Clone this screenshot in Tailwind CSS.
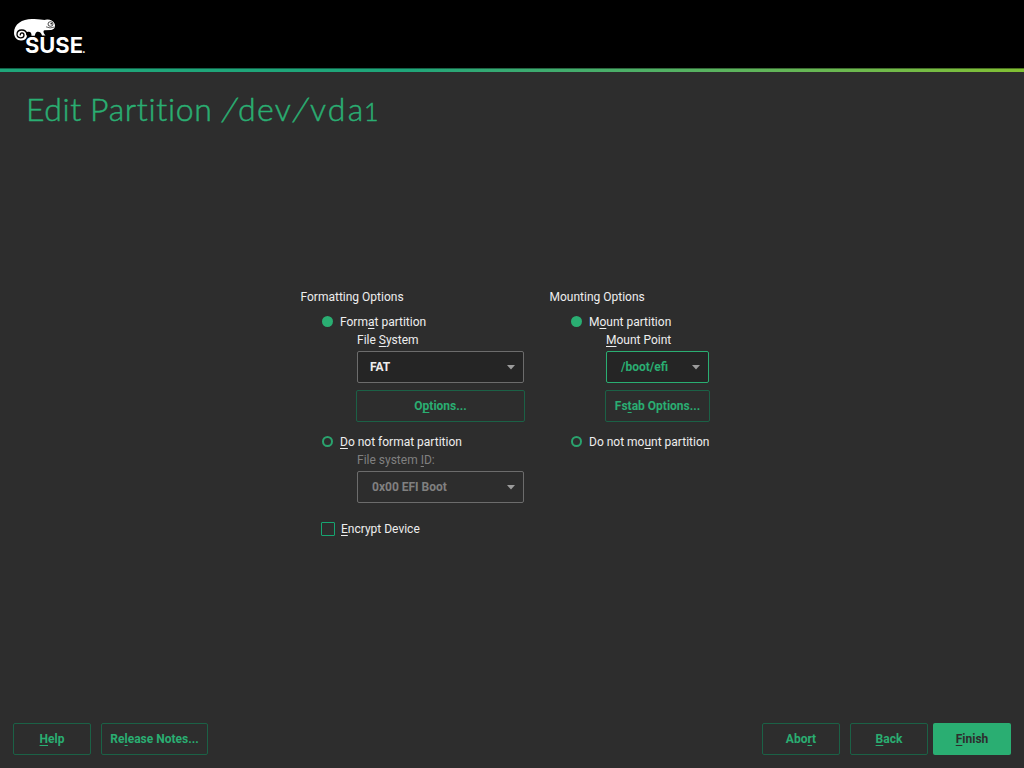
<!DOCTYPE html>
<html lang="en">
<head>
<meta charset="utf-8">
<title>Edit Partition</title>
<script src="https://cdn.jsdelivr.net/npm/@tailwindcss/browser@4"></script>
</head>
<body class="w-[1024px] h-[768px] overflow-hidden bg-[#2d2d2d] text-[#eeeeee] font-['Roboto',sans-serif] text-[12px] leading-[18px] flex flex-col [&_u]:underline-offset-[2px] [&_u]:decoration-1 [&_u]:[text-decoration-skip-ink:none]">
<header class="h-[68px] shrink-0 bg-black">
  <svg class="block" width="100" height="68" viewBox="0 0 100 68">
    <path fill="#fff" d="M14 33C14 24 22 19 32 19C39 18.500 43 20.500 46 19.800C49 19 53 20.500 54.500 23.500C56 27 54 29.500 51 30L44.500 30.300C43 30.500 43.300 33 44.500 34.300L45.500 35.500H42C41.500 33.500 40 31.800 38 31.800C35.500 31.700 35.500 34 34.800 35.700H31.500C31.600 33 30.500 31.400 28 31.800C25.500 32.300 26 34.500 27 36C26.500 39 24 40.500 21 40.500C17 40.500 14 37 14 33Z"/>
    <path fill="none" stroke="#000" stroke-width="1.300" stroke-linecap="round" d="M27 34.500C26 28.300 17.200 28.800 17 34.300C17 38.700 23.600 39 24 35.200C24 32.200 19.900 32.300 20.300 34.900"/>
    <ellipse cx="50.500" cy="24" rx="2.500" ry="2.300" fill="#fff" stroke="#000" stroke-width=".7"/>
    <circle cx="51.200" cy="23.800" r=".8" fill="#000"/>
    <path fill="none" stroke="#000" stroke-width=".6" d="M46 26.800Q50 29 54.500 27"/>
    <g fill="#fff" font-family="Inter, sans-serif">
      <text x="25" y="52.500" font-weight="700" font-size="21" textLength="58" lengthAdjust="spacingAndGlyphs">SUSE</text>
      <text x="82" y="52.500" font-weight="700" font-size="11">.</text>
    </g>
  </svg>
</header>
<div class="h-1 shrink-0 bg-linear-to-r from-[#1fa67a] from-40% to-[#82c032] border-t border-black/40"></div>
<h1 class="h-[72px] shrink-0 pl-[26px] pt-[15px] text-[32px] leading-[44px] font-light text-[#2aae72] font-['Lato',sans-serif] whitespace-nowrap flex items-baseline [-webkit-text-stroke:0.5px_#2aae72]"><span class="w-[64px] tracking-[0.6px] whitespace-pre">Edit </span><span class="w-[131px] tracking-[0.7px] whitespace-pre">Partition </span><span class="w-[17px] pl-[2px] -skew-x-12">/</span><span class="w-[54px] tracking-[1.4px]">dev</span><span class="w-[18px] pl-[2px] -skew-x-12">/</span><span class="w-[54px] tracking-[2.2px]">vda</span><span class="text-[25px]">1</span></h1>

<main class="flex-1 flex pl-[300px] pt-[144px] whitespace-nowrap">
  <section class="w-[249px] pr-[24px] flex flex-col">
    <h2 class="h-[18px] pl-[0.5px]">Formatting Options</h2>
    <label class="mt-[7px] h-[18px] pl-[22px] flex items-center"><span class="size-[11px] mr-[7px] mb-px rounded-full bg-[#2aae72]"></span><span>Form<u>a</u>t partition</span></label>
    <div class="h-[18px] pl-[57px]">File <u>S</u>ystem</div>
    <div class="mt-[2px] ml-[57px] w-[167px] h-8 rounded-[2px] border border-[#6c6c6c] bg-[#252525] pl-3 pr-[7px] flex items-center justify-between font-bold">FAT<svg width="9" height="5"><path d="M0 0H8L4 4.500Z" fill="#9c9c9c"/></svg></div>
    <button class="mt-[7px] ml-[56px] w-[169px] h-8 rounded-[2px] border border-[#1b6146] font-bold text-[#2aae72]">O<u>p</u>tions...</button>
    <label class="mt-[11px] h-[18px] pl-[22px] flex items-center"><span class="size-[11px] mr-[7px] mb-px rounded-full border-2 border-[#2aa36e]"></span><span><u>D</u>o not format partition</span></label>
    <div class="h-[18px] pl-[57px] text-[#808080]">File system <u>I</u>D:</div>
    <div class="mt-[2px] ml-[57px] w-[167px] h-8 rounded-[2px] border border-[#6c6c6c] pl-[14px] pr-[7px] flex items-center justify-between font-bold text-[#808080]">0x00 EFI Boot<svg width="9" height="5"><path d="M0 0H8L4 4.500Z" fill="#9c9c9c"/></svg></div>
    <label class="mt-[17px] h-[18px] pl-[21px] flex items-center"><span class="size-[14px] mr-[6px] rounded-[1px] border border-[#16a571]"></span><span><u>E</u>ncrypt Device</span></label>
  </section>
  <section class="w-[161px] flex flex-col">
    <h2 class="h-[18px] pl-[0.5px]">Mounting Options</h2>
    <label class="mt-[7px] h-[18px] pl-[22px] flex items-center"><span class="size-[11px] mr-[7px] mb-px rounded-full bg-[#2aae72]"></span><span>M<u>o</u>unt partition</span></label>
    <div class="h-[18px] pl-[57px]"><u>M</u>ount Point</div>
    <div class="mt-[2px] ml-[57px] w-[103px] h-8 rounded-[2px] border border-[#2aae72] bg-[#252525] pl-[14px] pr-[7px] flex items-center justify-between font-bold text-[#2aae72]">/boot/efi<svg width="9" height="5"><path d="M0 0H8L4 4.500Z" fill="#9c9c9c"/></svg></div>
    <button class="mt-[7px] ml-[56px] w-[105px] h-8 rounded-[2px] border border-[#1b6146] font-bold text-[#2aae72]">Fs<u>t</u>ab Options...</button>
    <label class="mt-[11px] h-[18px] pl-[22px] flex items-center"><span class="size-[11px] mr-[7px] mb-px rounded-full border-2 border-[#2aa36e]"></span><span>Do not mo<u>u</u>nt partition</span></label>
  </section>
</main>

<footer class="h-[45px] shrink-0 px-[13px] flex items-start font-bold text-[#2aae72]">
  <button class="w-[78px] h-8 rounded-[2px] border border-[#1b6146]"><u>H</u>elp</button>
  <button class="ml-[10px] w-[107px] h-8 rounded-[2px] border border-[#1b6146]">Re<u>l</u>ease Notes...</button>
  <button class="ml-auto w-[78px] h-8 rounded-[2px] border border-[#1b6146]">Abo<u>r</u>t</button>
  <button class="ml-[10px] w-[78px] h-8 rounded-[2px] border border-[#1b6146]"><u>B</u>ack</button>
  <button class="ml-[5px] w-[78px] h-8 rounded-[2px] bg-[#2aae72] text-[#2d2d2d]"><u>F</u>inish</button>
</footer>
</body>
</html>
